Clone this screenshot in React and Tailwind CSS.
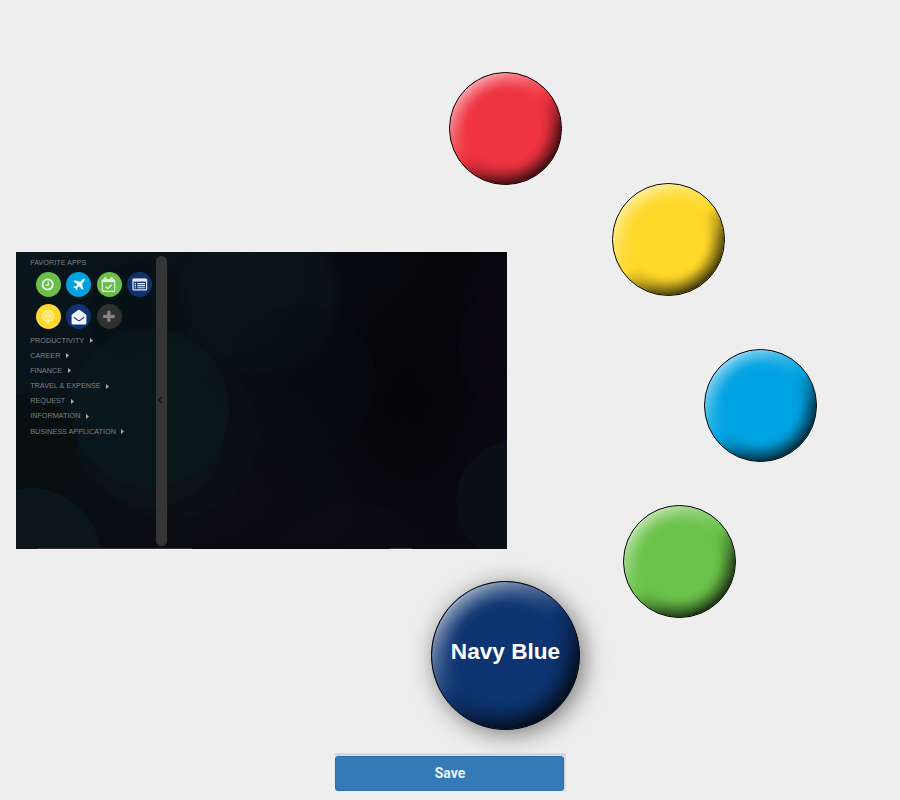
import React from "react";
import { FaPodcast } from "react-icons/fa";

const menu = [
  "PRODUCTIVITY",
  "CAREER",
  "FINANCE",
  "TRAVEL & EXPENSE",
  "REQUEST",
  "INFORMATION",
  "BUSINESS APPLICATION",
];

const balls = [
  { name: "Red", style: "left-[449px] top-[72px] bg-[#ef3340]" },
  { name: "Yellow", style: "left-[612px] top-[183px] bg-[#ffd92a]" },
  { name: "Light Blue", style: "left-[704px] top-[349px] bg-[#00a3e2]" },
  { name: "Green", style: "left-[623px] top-[505px] bg-[#6cc24a]" },
];

function ClockIcon() {
  return (
    <svg viewBox="0 0 16 16" className="size-4" fill="none" stroke="#f4f9ef">
      <circle cx="7.7" cy="7.5" r="5.1" strokeWidth="1.9" />
      <path d="M8.3 4.6V8.2H5.7" strokeWidth="1.2" />
    </svg>
  );
}

function PlaneIcon() {
  return (
    <svg viewBox="0 0 16 16" className="size-4" fill="#f1faff">
      <path d="M13.6 1.9C14 2.6 13.4 4 12.5 4.9L11 6.5L12.4 12L11.2 13.1L8.2 9.2L6.2 11.1L6.5 12.8L5.6 13.5L4.2 11.3L2.1 10.1L2.8 9.2L4.6 9.5L6.5 7.5L2.5 4.5L3.6 3.3L9.3 4.7L10.8 3.1C11.7 2.2 13 1.5 13.6 1.9Z" />
    </svg>
  );
}

function CalendarIcon() {
  return (
    <svg viewBox="0 0 16 16" className="size-4" fill="none" stroke="#eef8e8">
      <rect x="1.3" y="2.8" width="12.4" height="11.6" rx="0.8" strokeWidth="1.1" />
      <path d="M1.3 4.1H13.7" strokeWidth="2" />
      <path d="M4.3 1.8V3.4M10.8 1.8V3.4" strokeWidth="2.9" strokeLinecap="round" />
      <path d="M4.3 1.7V3.6M10.8 1.7V3.6" stroke="#8dcf72" strokeWidth="0.9" />
      <path d="M4.7 9.6L6.8 11.6L10.5 7.7" strokeWidth="1.3" />
    </svg>
  );
}

function ListIcon() {
  return (
    <svg viewBox="0 0 16 16" className="size-4" fill="none" stroke="#e8ecf8">
      <rect x="1" y="2" width="13.6" height="10.8" rx="0.9" strokeWidth="1.2" />
      <path d="M.8 3.2H14.8" strokeWidth="2.8" />
      <path d="M5.2 6.6H13M5.2 8.6H13M5.2 10.7H13" strokeWidth="1.15" />
      <path d="M2.6 6.6H4M2.6 8.6H4M2.6 10.7H4" strokeWidth="1.15" />
    </svg>
  );
}

function EnvelopeIcon() {
  return (
    <svg viewBox="0 0 16 16" className="size-4">
      <path d="M.6 6.1C3 4 5.3 2.4 7.2 1.1Q8 .5 8.8 1.1C10.7 2.4 13 4 15.4 6.1V14.2Q15.4 15.5 14 15.5H2Q.6 15.5 .6 14.2Z" fill="#f4f6ff" />
      <path d="M2.8 8.2L6.7 11.1Q8 12.1 9.3 11.1L13.2 8.2" fill="none" stroke="#173873" strokeWidth="1.1" />
    </svg>
  );
}

function PlusIcon() {
  return (
    <svg viewBox="0 0 16 16" className="size-4">
      <path d="M7.9 1.8V12.8M2.2 7.3H13.6" stroke="#858585" strokeWidth="3.2" />
    </svg>
  );
}

const apps = [
  { name: "clock", style: "bg-[#6abf4b]", icon: <ClockIcon /> },
  { name: "travel", style: "bg-[#00a1df]", icon: <PlaneIcon /> },
  { name: "calendar", style: "bg-[#6abf4b]", icon: <CalendarIcon /> },
  { name: "list", style: "bg-[#10336f]", icon: <ListIcon /> },
  { name: "podcast", style: "bg-[#fed82f]", icon: <FaPodcast className="size-3.5 text-[#fff1a6]" /> },
  { name: "mail", style: "bg-[#10336f]", icon: <EnvelopeIcon /> },
  { name: "add", style: "bg-[#303030]", icon: <PlusIcon /> },
];

function Backdrop() {
  return (
    <svg className="absolute inset-0 size-full" viewBox="0 0 491 297">
      <defs>
        <linearGradient id="base" x1="0" y1="0" x2="1" y2="0.25">
          <stop offset="0" stopColor="#08151a" />
          <stop offset="0.3" stopColor="#091319" />
          <stop offset="0.6" stopColor="#070a10" />
          <stop offset="0.85" stopColor="#060509" />
          <stop offset="1" stopColor="#0a0812" />
        </linearGradient>
        <radialGradient id="violet">
          <stop offset="0" stopColor="#0c0b15" />
          <stop offset="0.6" stopColor="#0b0b14" stopOpacity="0.8" />
          <stop offset="1" stopColor="#0b0b14" stopOpacity="0" />
        </radialGradient>
        <radialGradient id="dark">
          <stop offset="0" stopColor="#050407" />
          <stop offset="1" stopColor="#050407" stopOpacity="0" />
        </radialGradient>
        <radialGradient id="teal">
          <stop offset="0" stopColor="#0a181d" />
          <stop offset="0.8" stopColor="#0a181d" stopOpacity="0.8" />
          <stop offset="1" stopColor="#0a181d" stopOpacity="0" />
        </radialGradient>
      </defs>
      <rect width="491" height="297" fill="url(#base)" />
      <ellipse cx="215" cy="250" rx="210" ry="120" fill="url(#violet)" />
      <ellipse cx="400" cy="155" rx="100" ry="130" fill="url(#dark)" />
      <circle cx="0" cy="205" r="64" fill="#070f10" />
      <circle cx="125" cy="62" r="52" fill="#061012" opacity="0.4" />
      <circle cx="245" cy="42" r="84" fill="url(#teal)" opacity="0.7" />
      <circle cx="285" cy="128" r="75" fill="#0a0d16" opacity="0.35" />
      <circle cx="156" cy="182" r="86" fill="#0a111a" opacity="0.45" />
      <circle cx="134" cy="156" r="79" fill="#09181d" opacity="0.75" />
      <circle cx="134" cy="182" r="74" fill="#0b191f" opacity="0.35" />
      <circle cx="15" cy="306" r="70" fill="#0a151c" />
      <circle cx="337" cy="335" r="86" fill="#0c0a14" opacity="0.8" />
      <circle cx="520" cy="95" r="78" fill="#0b0912" opacity="0.6" />
      <circle cx="502" cy="250" r="62" fill="#0a131a" opacity="0.75" />
      <path d="M21 296.5H176M374 296.5H396" stroke="#39343b" strokeWidth="1" />
    </svg>
  );
}

function Preview() {
  return (
    <section className="relative mt-[252px] ml-4 h-[297px] w-[491px] overflow-hidden bg-[#080b10]">
      <Backdrop />
      <div className="relative flex h-full">
        <div className="w-[140px] pl-[14.2px] pt-[3.4px] text-[7.25px] text-[#7d8285]">
          <h2 className="h-[15px] whitespace-nowrap leading-[15px]">FAVORITE APPS</h2>
          <div className="ml-[5.7px] mt-[2.1px] grid w-[123px] grid-cols-[repeat(4,25px)] gap-x-[5.5px] gap-y-[7px]">
            {apps.map((app) => (
              <div key={app.name} className={`flex size-[25px] items-center justify-center rounded-full ${app.style}`}>
                {app.icon}
              </div>
            ))}
          </div>
          <ul className="mt-[3.9px]">
            {menu.map((item) => (
              <li key={item} className="flex h-[15.2px] items-center gap-[5.5px] whitespace-nowrap">
                <span>{item}</span>
                <svg className="mb-px h-[5px] w-[3px]" viewBox="0 0 3 5">
                  <path d="M0 0L3 2.5L0 5Z" fill="#a7abae" />
                </svg>
              </li>
            ))}
          </ul>
        </div>
        <div className="mt-1 flex h-[290px] w-[11px] items-center rounded-full bg-[#353535]">
          <svg className="mb-0.5 ml-0.5 h-[6px] w-1" viewBox="0 0 4 6">
            <path d="M3.3 .5L1 3L3.3 5.5" fill="none" stroke="#111" strokeWidth="1.3" />
          </svg>
        </div>
      </div>
    </section>
  );
}

function Bevel() {
  return (
    <span className="absolute inset-0 rounded-full bg-[linear-gradient(142deg,rgba(255,255,255,0.65)_12%,rgba(255,255,255,0.32)_32%,rgba(255,255,255,0)_50%,rgba(0,0,0,0)_50%,rgba(0,0,0,0.65)_70%,rgba(0,0,0,0.85)_88%)] [mask-image:radial-gradient(closest-side,transparent_62%,rgba(0,0,0,0.12)_72%,rgba(0,0,0,0.5)_85%,rgba(0,0,0,0.85)_97%,black_100%)]" />
  );
}

export default function App() {
  return (
    <main className="relative flex h-[800px] w-[900px] flex-col overflow-hidden bg-[#eeeeee] font-['Liberation_Sans',sans-serif]">
      <Preview />
      {balls.map((ball) => (
        <button
          key={ball.name}
          aria-label={ball.name}
          className={`absolute size-[113px] rounded-full border border-black ${ball.style}`}
        >
          <Bevel />
        </button>
      ))}
      <button className="absolute left-[431px] top-[581px] flex size-[149px] items-center justify-center rounded-full border border-black bg-[#0d3470] pb-[8px] text-[22.6px] font-bold whitespace-nowrap text-white shadow-[4px_4px_24px_rgba(0,0,0,0.5)]">
        <Bevel />
        <span className="relative">Navy Blue</span>
      </button>
      <div className="relative mt-[204px] ml-[335px] h-[38px] w-[231px] bg-[#d5d8e2] pt-[3px]">
        <button className="flex h-[35px] w-[229px] items-center justify-center rounded-[3px] border border-[#2c6ca7] bg-[#337ab7] pb-[2px] pl-px font-[Roboto,sans-serif] text-sm font-bold text-[#e9f5ff]">
          Save
        </button>
      </div>
    </main>
  );
}
